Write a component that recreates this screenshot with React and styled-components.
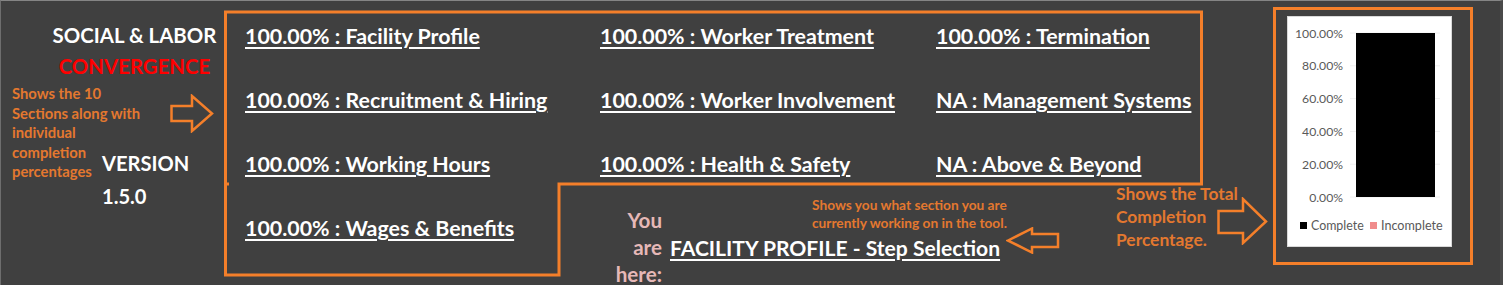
import React from 'react';
import styled, { createGlobalStyle } from 'styled-components';

const GlobalStyle = createGlobalStyle`
  html, body {
    margin: 0;
    padding: 0;
    background: #404040;
  }
  body {
    font-family: Lato, "Open Sans", "Liberation Sans", sans-serif;
  }
`;

const ORANGE = '#f47f2a';
const NOTE = '#e4782f';

const Page = styled.div`
  width: 1503px;
  height: 285px;
  box-sizing: border-box;
  display: flex;
  background: #404040;
  border-top: 1px solid #858585;
  border-left: 1px solid #6e6e6e;
  border-right: 3px solid #4a4a4a;
  overflow: hidden;
`;

const LeftPanel = styled.div`
  width: 223px;
  flex-shrink: 0;
  display: flex;
  flex-direction: column;
  padding-top: 19px;
`;

const Title = styled.div`
  padding-left: 44px;
  text-align: center;
  font-weight: 700;
  font-size: 20.4px;
  line-height: 31px;
  white-space: nowrap;
  color: ${p => p.color || '#ffffff'};
`;

const LeftBody = styled.div`
  display: grid;
  grid-template-columns: 101px 1fr;
  margin-top: 2px;
`;

const SideNote = styled.div`
  grid-column: 1 / 3;
  grid-row: 1;
  padding-left: 11px;
  font-weight: 700;
  font-size: 14.8px;
  line-height: 19.5px;
  white-space: nowrap;
  color: ${NOTE};
`;

const Version = styled.div`
  grid-column: 2;
  grid-row: 1;
  margin-top: 63px;
  font-weight: 700;
  font-size: 20.1px;
  line-height: 33px;
  color: #ffffff;
`;

const SideArrow = styled.svg`
  grid-column: 2;
  grid-row: 1;
  justify-self: end;
  margin-top: 10px;
  margin-right: 10px;
`;

const Main = styled.div`
  position: relative;
  width: 1049px;
  flex-shrink: 0;
  display: flex;
  flex-direction: column;
`;

const Outline = styled.svg`
  position: absolute;
  left: 0;
  top: -1px;
  pointer-events: none;
`;

const SectionGrid = styled.div`
  display: grid;
  grid-template-columns: 355px 336px 1fr;
  grid-auto-rows: 64px;
  padding-left: 21px;
  padding-top: 3px;
  width: 978px;
  box-sizing: border-box;
`;

const Cell = styled.div`
  display: flex;
  align-items: center;
`;

const LinkText = styled.span`
  color: #ffffff;
  font-weight: 700;
  font-size: ${p => p.size || 21.4}px;
  line-height: 27px;
  white-space: nowrap;
  text-decoration: underline;
  text-decoration-thickness: 2px;
  text-underline-offset: 3px;
`;

const BottomRow = styled.div`
  display: flex;
  align-items: flex-start;
  height: 89px;
`;

const WagesCell = styled(Cell)`
  width: 355px;
  height: 64px;
  padding-left: 21px;
  box-sizing: border-box;
  flex-shrink: 0;
`;

const HereLabel = styled.div`
  width: 60px;
  margin-left: 23px;
  margin-top: 11px;
  text-align: right;
  color: #e6b8b7;
  font-weight: 700;
  font-size: 20.6px;
  line-height: 27px;
  flex-shrink: 0;
`;

const Current = styled.div`
  margin-left: 8px;
  display: flex;
  flex-direction: column;
`;

const SmallNote = styled.div`
  margin-left: 142px;
  color: ${NOTE};
  font-weight: 700;
  font-size: 13.7px;
  line-height: 18px;
  white-space: nowrap;
`;

const CurrentRow = styled.div`
  display: flex;
  align-items: flex-start;
  margin-top: 2px;
`;

const BackArrow = styled.svg`
  margin-left: 6px;
  margin-top: -7px;
`;

const TotalNote = styled.div`
  position: relative;
  margin-left: auto;
  margin-right: 6px;
  margin-top: -14px;
  width: 151px;
  height: 70px;
  color: ${NOTE};
  font-weight: 700;
  font-size: 17.4px;
  line-height: 23px;
  white-space: nowrap;
`;

const TotalArrow = styled.svg`
  position: absolute;
  left: 101px;
  top: 15px;
`;

const ChartFrame = styled.div`
  margin-top: 6px;
  width: 200px;
  height: 258px;
  box-sizing: border-box;
  border: 3px solid ${ORANGE};
  padding: 6px 18px 15px 11px;
  flex-shrink: 0;
`;

const ChartBox = styled.div`
  width: 100%;
  height: 100%;
  background: #ffffff;
  border: 1px solid #d9d9d9;
  box-sizing: border-box;
`;

const sections = [
  ['100.00% : Facility Profile', '100.00% : Worker Treatment', '100.00% : Termination'],
  ['100.00% : Recruitment & Hiring', '100.00% : Worker Involvement', 'NA : Management Systems'],
  ['100.00% : Working Hours', '100.00% : Health & Safety', 'NA : Above & Beyond'],
];

const ticks = ['100.00%', '80.00%', '60.00%', '40.00%', '20.00%', '0.00%'];

const Chart = () => (
  <svg width="163" height="229" viewBox="0 0 163 229">
    {ticks.map((t, i) => {
      const y = 16 + i * 32.8;
      return (
        <g key={t}>
          <line x1="62" x2="152" y1={y} y2={y} stroke="#f0f0f0" strokeWidth="1" />
          <text x="55" y={y + 4.5} textAnchor="end" fontSize="12.2" fill="#595959"
            fontFamily="Lato, 'Open Sans', sans-serif">{t}</text>
        </g>
      );
    })}
    <rect x="68" y="16" width="79" height="164" fill="#000000" />
    <rect x="12" y="205" width="7" height="7" fill="#000000" />
    <text x="23" y="213" fontSize="12.4" fill="#595959" fontFamily="Lato, 'Open Sans', sans-serif">Complete</text>
    <rect x="82" y="205" width="7" height="7" fill="#f08c8c" />
    <text x="93" y="213" fontSize="12.6" fill="#595959" fontFamily="Lato, 'Open Sans', sans-serif">Incomplete</text>
  </svg>
);

export default function App() {
  return (
    <>
      <GlobalStyle />
      <Page>
        <LeftPanel>
          <Title>SOCIAL &amp; LABOR</Title>
          <Title color="#ff0000">CONVERGENCE</Title>
          <LeftBody>
            <SideNote>
              Shows the 10<br />
              Sections along with<br />
              individual<br />
              completion<br />
              percentages
            </SideNote>
            <SideArrow width="44" height="39" viewBox="0 0 44 39">
              <path d="M1.5 12 H22 V2 L42 19.5 L22 37 V27 H1.5 Z" fill="none" stroke={ORANGE} strokeWidth="2.5" strokeLinejoin="miter" />
            </SideArrow>
            <Version>
              VERSION<br />
              1.5.0
            </Version>
          </LeftBody>
        </LeftPanel>

        <Main>
          <Outline width="980" height="280" viewBox="0 0 980 280">
            <path d="M1.5 12 H977.5 V184 H335 V275 H1.5 Z" fill="none" stroke={ORANGE} strokeWidth="3" />
            <line x1="1.5" x2="5" y1="184" y2="184" stroke={ORANGE} strokeWidth="3" />
          </Outline>
          <SectionGrid>
            {sections.flat().map(s => (
              <Cell key={s}>
                <LinkText>{s}</LinkText>
              </Cell>
            ))}
          </SectionGrid>
          <BottomRow>
            <WagesCell>
              <LinkText>100.00% : Wages &amp; Benefits</LinkText>
            </WagesCell>
            <HereLabel>
              You<br />
              are<br />
              here:
            </HereLabel>
            <Current>
              <SmallNote>
                Shows you what section you are<br />
                currently working on in the tool.
              </SmallNote>
              <CurrentRow>
                <LinkText size={21.1}>FACILITY PROFILE - Step Selection</LinkText>
                <BackArrow width="54" height="27" viewBox="0 0 54 27">
                  <path d="M2 13.5 L26 1.5 V7 H52 V20 H26 V25.5 Z" fill="none" stroke={ORANGE} strokeWidth="2.5" />
                </BackArrow>
              </CurrentRow>
            </Current>
            <TotalNote>
              Shows the Total<br />
              Completion<br />
              Percentage.
              <TotalArrow width="51" height="48" viewBox="0 0 51 48">
                <path d="M1.5 14 H26 V2 L49 24.5 L26 46 V36 H1.5 Z" fill="none" stroke={ORANGE} strokeWidth="2.5" />
              </TotalArrow>
            </TotalNote>
          </BottomRow>
        </Main>

        <ChartFrame>
          <ChartBox>
            <Chart />
          </ChartBox>
        </ChartFrame>
      </Page>
    </>
  );
}
